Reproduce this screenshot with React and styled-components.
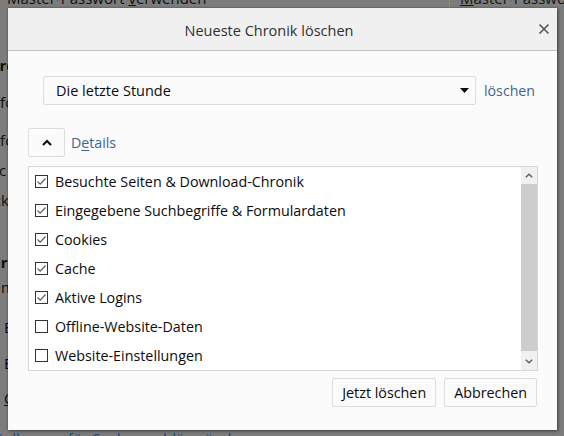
import React, { useState } from 'react';
import styled, { createGlobalStyle } from 'styled-components';

const GlobalStyle = createGlobalStyle`
  html, body {
    margin: 0;
    padding: 0;
    height: 100%;
    overflow: hidden;
  }
  body {
    font-family: "Open Sans", "Noto Sans", sans-serif;
  }
`;

const ITEMS = [
  { label: 'Besuchte Seiten & Download-Chronik', checked: true },
  { label: 'Eingegebene Suchbegriffe & Formulardaten', checked: true },
  { label: 'Cookies', checked: true },
  { label: 'Cache', checked: true },
  { label: 'Aktive Logins', checked: true },
  { label: 'Offline-Website-Daten', checked: false },
  { label: 'Website-Einstellungen', checked: false },
];

// dimmed preferences page behind the modal
const BG_LINES = [
  { text: 'Chronik', top: 46, shift: -20, bold: true },
  { text: 'Firefox wird eine Chronik', top: 17, shift: -26 },
  { text: 'Firefox wird die Chronik', top: 18, shift: -26 },
  { text: 'Basic', top: 10, shift: -30 },
  { text: 'Trackern', top: 10, shift: -29 },
  { text: 'Adressleiste', top: 42, shift: -19, bold: true },
  { text: 'Beim Benutzen', top: 5, shift: -21 },
  { text: 'Eingegebene Adressen', top: 20, shift: 4 },
  { text: 'Einträge vorschlagen', top: 16, shift: 4 },
  { text: 'Chronik', top: 15, shift: 4, underline: true },
];

const App = () => {
  const [items, setItems] = useState(ITEMS);

  const toggle = (i) => {
    setItems(items.map((it, idx) => (idx === i ? { ...it, checked: !it.checked } : it)));
  };

  return (
    <>
      <GlobalStyle />
      <Page>
        <TopLine>
          <span>Master-Passwort <u>v</u>erwenden</span>
          <GhostButton><u>M</u>aster-Passwort ändern…</GhostButton>
        </TopLine>
        {BG_LINES.map((l, i) => (
          <BgLine key={i} $top={l.top} $shift={l.shift} $bold={l.bold} $underline={l.underline}>
            {l.text}
          </BgLine>
        ))}
        <BgLink>Einstellungen für Suchvorschläge ändern</BgLink>
      </Page>

      <Dialog>
        <Header>
          <Title>Neueste Chronik löschen</Title>
          <CloseButton aria-label="Schließen">
            <svg width="12" height="12" viewBox="0 0 12 12">
              <path d="M1.5 1.5 L10.5 10.5 M10.5 1.5 L1.5 10.5" stroke="#4c5663" strokeWidth="1.6" fill="none" />
            </svg>
          </CloseButton>
        </Header>

        <Body>
          <RangeRow>
            <Select>
              <span>Die letzte Stunde</span>
              <svg width="9" height="5" viewBox="0 0 9 5">
                <path d="M0 0 H9 L4.5 5 Z" fill="#0c0c0d" />
              </svg>
            </Select>
            <Label>löschen</Label>
          </RangeRow>

          <DetailsRow>
            <SmallButton aria-label="Details">
              <svg width="10" height="7" viewBox="0 0 10 7">
                <path d="M1 6 L5 2 L9 6" stroke="#0c0c0d" strokeWidth="2" fill="none" />
              </svg>
            </SmallButton>
            <Label>D<u>e</u>tails</Label>
          </DetailsRow>

          <ListBox>
            <List>
              {items.map((it, i) => (
                <Item key={it.label} onClick={() => toggle(i)}>
                  <Check $checked={it.checked}>
                    {it.checked && (
                      <svg width="11" height="11" viewBox="0 0 11 11">
                        <path d="M1.5 5.5 L4.2 8.2 L9.5 2.5" stroke="#5b5b5b" strokeWidth="1.2" fill="none" />
                      </svg>
                    )}
                  </Check>
                  {it.label}
                </Item>
              ))}
            </List>
            <Scrollbar>
              <ScrollArrow>
                <svg width="8" height="5" viewBox="0 0 8 5">
                  <path d="M0.8 4.2 L4 1.2 L7.2 4.2" stroke="#606060" strokeWidth="1.4" fill="none" />
                </svg>
              </ScrollArrow>
              <Thumb />
              <ScrollArrow>
                <svg width="8" height="5" viewBox="0 0 8 5">
                  <path d="M0.8 0.8 L4 3.8 L7.2 0.8" stroke="#606060" strokeWidth="1.4" fill="none" />
                </svg>
              </ScrollArrow>
            </Scrollbar>
          </ListBox>

          <Footer>
            <Button>Jetzt löschen</Button>
            <Button>Abbrechen</Button>
          </Footer>
        </Body>
      </Dialog>
    </>
  );
};

export default App;

const Page = styled.div`
  width: 564px;
  height: 436px;
  background-color: #7c7c7c;
  color: #0e0e0e;
  font-size: 15px;
  overflow: hidden;
  display: flex;
  flex-direction: column;
`;

const TopLine = styled.div`
  display: flex;
  align-items: flex-start;
  justify-content: space-between;
  height: 22px;
  flex-shrink: 0;
  margin-top: -13px;
  padding-left: 7px;
  line-height: 22px;
  u { text-decoration-thickness: 1px; }
`;

const GhostButton = styled.div`
  width: 104px;
  height: 30px;
  padding-left: 10px;
  border-left: 1px solid #8a8a8a;
  display: flex;
  align-items: flex-start;
  white-space: nowrap;
  overflow: hidden;
  color: #151515;
`;

const BgLine = styled.div`
  height: 20px;
  flex-shrink: 0;
  line-height: 20px;
  margin-top: ${p => p.$top}px;
  margin-left: ${p => p.$shift}px;
  font-weight: ${p => (p.$bold ? 700 : 400)};
  text-decoration: ${p => (p.$underline ? 'underline' : 'none')};
  white-space: nowrap;
`;

const BgLink = styled.div`
  height: 20px;
  flex-shrink: 0;
  line-height: 20px;
  margin-top: 20px;
  margin-left: -30px;
  color: #1a4878;
  white-space: nowrap;
`;

const Dialog = styled.div`
  position: absolute;
  left: 8px;
  top: 8px;
  width: 549px;
  height: 422px;
  background-color: #fbfbfb;
  box-shadow: 1px 1px 3px rgba(0, 0, 0, 0.45), 0 0 2px rgba(0, 0, 0, 0.25);
  display: flex;
  flex-direction: column;
  color: #0c0c0d;
`;

const Header = styled.div`
  position: relative;
  height: 43px;
  flex-shrink: 0;
  box-sizing: border-box;
  padding-right: 27px;
  background-color: #f0f0f0;
  border-bottom: 1px solid #c4c4c4;
  display: flex;
  align-items: center;
  justify-content: center;
`;

const Title = styled.div`
  font-size: 14.5px;
  color: #303030;
  margin-top: 2px;
`;

const CloseButton = styled.div`
  position: absolute;
  right: 7px;
  top: 15px;
  width: 12px;
  height: 12px;
  display: flex;
`;

const Body = styled.div`
  flex: 1;
  display: flex;
  flex-direction: column;
  padding: 25px 19px 23px 20px;
`;

const RangeRow = styled.div`
  display: flex;
  align-items: center;
  margin-left: 15px;
  gap: 8px;
`;

const Select = styled.div`
  width: 433px;
  height: 29px;
  box-sizing: border-box;
  border: 1px solid #dcdcdc;
  border-radius: 2px;
  background-color: #fbfbfb;
  display: flex;
  align-items: center;
  justify-content: space-between;
  padding: 0 6px 0 12px;
  font-size: 14.5px;
`;

const Label = styled.span`
  font-size: 14.2px;
  color: #3e6590;
  u { text-decoration-thickness: 1px; text-underline-offset: 2px; }
`;

const DetailsRow = styled.div`
  display: flex;
  align-items: center;
  gap: 6px;
  margin-top: 23px;
`;

const SmallButton = styled.div`
  width: 37px;
  height: 29px;
  box-sizing: border-box;
  border: 1px solid #dcdcdc;
  border-radius: 2px;
  background-color: #fbfbfb;
  display: flex;
  align-items: center;
  justify-content: center;
`;

const ListBox = styled.div`
  margin-top: 9px;
  width: 510px;
  height: 205px;
  flex-shrink: 0;
  box-sizing: border-box;
  border: 1px solid #d7d7d7;
  background-color: #ffffff;
  display: flex;
  overflow: hidden;
`;

const List = styled.div`
  flex: 1;
  display: flex;
  flex-direction: column;
`;

const Item = styled.div`
  height: 29px;
  flex-shrink: 0;
  display: flex;
  align-items: center;
  gap: 7px;
  padding-left: 6px;
  font-size: 14.3px;
  cursor: default;
  white-space: nowrap;
`;

const Check = styled.div`
  width: 13px;
  height: 13px;
  box-sizing: border-box;
  border: 1px solid #333333;
  background-color: #ffffff;
  display: flex;
  align-items: center;
  justify-content: center;
`;

const Scrollbar = styled.div`
  width: 16px;
  background-color: #f0f0f0;
  display: flex;
  flex-direction: column;
`;

const ScrollArrow = styled.div`
  height: 17px;
  display: flex;
  align-items: center;
  justify-content: center;
`;

const Thumb = styled.div`
  flex: 1;
  background-color: #cdcdcd;
  margin-bottom: 2px;
`;

const Footer = styled.div`
  margin-top: auto;
  display: flex;
  justify-content: flex-end;
  gap: 8px;
  padding-right: 1px;
`;

const Button = styled.div`
  height: 29px;
  box-sizing: border-box;
  padding: 0 9px;
  border: 1px solid #dcdcdc;
  border-radius: 2px;
  background-color: #fbfbfb;
  display: flex;
  align-items: center;
  font-size: 14.3px;
  white-space: nowrap;
`;
